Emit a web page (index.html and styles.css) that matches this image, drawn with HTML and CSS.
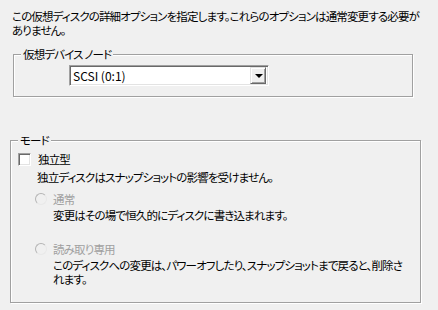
FILE: index.html
```html
<!DOCTYPE html>
<html lang="ja">
  <head>
    <meta charset="UTF-8" />
    <title>詳細オプション</title>
    <link rel="stylesheet" href="styles.css">
  </head>
  <body>
    <p class="intro">この仮想ディスクの詳細オプションを指定します。これらのオプションは通常変更する必要が<br>ありません。</p>

    <fieldset class="group node">
      <legend>仮想デバイス ノード</legend>
      <div class="combo">
        <span class="value">SCSI (0:1)</span>
        <span class="arrow"></span>
      </div>
    </fieldset>

    <fieldset class="group mode">
      <legend>モード</legend>
      <div class="row check-row">
        <span class="check"></span>
        <span>独立型</span>
      </div>
      <p class="note">独立ディスクはスナップショットの影響を受けません。</p>

      <div class="row radio-row first">
        <span class="radio"></span>
        <span class="disabled">通常</span>
      </div>
      <p class="desc">変更はその場で恒久的にディスクに書き込まれます。</p>

      <div class="row radio-row">
        <span class="radio"></span>
        <span class="disabled">読み取り専用</span>
      </div>
      <p class="desc">このディスクへの変更は、パワーオフしたり、スナップショットまで戻ると、削除さ<br>れます。</p>
    </fieldset>
  </body>
</html>
```

FILE: styles.css
```css
* {
  margin: 0;
  padding: 0;
  box-sizing: border-box;
  font-family: 'Noto Sans CJK JP', 'Liberation Sans', sans-serif;
}
body {
  width: 438px;
  height: 310px;
  background: #f0f0f0;
  color: #000;
  font-size: 11.5px;
  line-height: 14px;
  letter-spacing: -0.85px;
  font-feature-settings: "palt";
  overflow: hidden;
}
.intro {
  padding: 9px 0 0 12px;
  white-space: nowrap;
}
.group {
  border: 1px solid #a0a0a0;
  box-shadow: 1px 1px 0 #fff, inset 1px 1px 0 #fff;
}
.group legend {
  margin-left: 7px;
  padding: 0 2px;
  background: #f0f0f0;
  line-height: 14px;
}
.node {
  width: 400px;
  margin: 10px 0 0 13px;
  padding: 4px 0 10px 0;
}
.combo {
  width: 200px;
  height: 21px;
  margin-left: 55px;
  display: flex;
  align-items: center;
  justify-content: space-between;
  background: #fff;
  border: 1px solid;
  border-color: #a0a0a0 #fff #fff #a0a0a0;
  box-shadow: inset 1px 1px 0 #696969, inset -1px -1px 0 #e3e3e3;
  padding: 1px 2px 1px 3px;
}
.combo .value {
  letter-spacing: 0;
  font-size: 12px;
}
.arrow {
  width: 16px;
  height: 17px;
  background: #f0f0f0;
  border: 1px solid;
  border-color: #e3e3e3 #696969 #696969 #e3e3e3;
  box-shadow: inset 1px 1px 0 #fff, inset -1px -1px 0 #a0a0a0;
  display: flex;
  align-items: center;
  justify-content: center;
}
.arrow::after {
  content: "";
  border-left: 4px solid transparent;
  border-right: 4px solid transparent;
  border-top: 4px solid #000;
  margin-left: 1px;
}
.mode {
  width: 411px;
  margin: 36px 0 0 10px;
  padding: 0 0 16px 0;
}
.row {
  display: flex;
  align-items: center;
  height: 14px;
}
.check-row {
  margin-top: 5px;
  padding-left: 7px;
}
.check {
  width: 13px;
  height: 13px;
  margin-right: 7px;
  background: #fff;
  border: 1px solid;
  border-color: #a0a0a0 #fff #fff #a0a0a0;
  box-shadow: inset 1px 1px 0 #696969, inset -1px -1px 0 #e3e3e3;
}
.note {
  margin-top: 4px;
  padding-left: 26px;
  white-space: nowrap;
}
.radio-row {
  margin-top: 8px;
  padding-left: 24px;
}
.radio {
  width: 12px;
  height: 12px;
  margin-right: 6px;
  border-radius: 50%;
  background: #f0f0f0;
  border: 1px solid;
  border-color: #b4b4b4 #e8e8e8 #e8e8e8 #b4b4b4;
}
.disabled {
  color: #a0a0a0;
}
.desc {
  margin-top: 2px;
  padding-left: 42px;
  white-space: nowrap;
}
.desc + .radio-row {
  margin-top: 20px;
}
```
